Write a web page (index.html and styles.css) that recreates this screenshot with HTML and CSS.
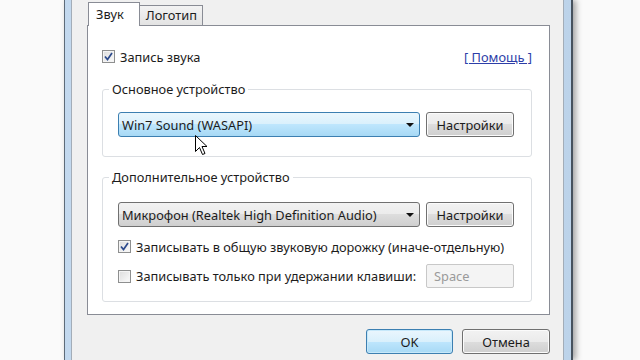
FILE: index.html
```html
<!DOCTYPE html>
<html lang="ru">
<head>
    <meta charset="UTF-8">
    <meta name="viewport" content="width=device-width, initial-scale=1.0">
    <title>Настройки записи</title>
    <link rel="stylesheet" href="styles.css">
</head>
<body>

    <div class="screen">
        <div class="frame">
            <div class="dialog">
                <div class="tabs">
                    <div class="tab active">Звук</div>
                    <div class="tab">Логотип</div>
                </div>

                <div class="panel">
                    <div class="top-row">
                        <label class="check">
                            <span class="box">
                                <svg width="9" height="9" viewBox="0 0 9 9"><path d="M1 4.5 L3.5 7.5 L8 1" fill="none" stroke="#2c4a8c" stroke-width="1.7"/></svg>
                            </span>
                            Запись звука
                        </label>
                        <a class="help" href="#">[ Помощь ]</a>
                    </div>

                    <fieldset class="group group-main">
                        <legend>Основное устройство</legend>
                        <div class="device-row">
                            <div class="combo hover">
                                <span>Win7 Sound (WASAPI)</span>
                                <span class="arrow"></span>
                            </div>
                            <button class="btn">Настройки</button>
                        </div>
                    </fieldset>

                    <fieldset class="group group-extra">
                        <legend>Дополнительное устройство</legend>
                        <div class="device-row">
                            <div class="combo">
                                <span>Микрофон (Realtek High Definition Audio)</span>
                                <span class="arrow"></span>
                            </div>
                            <button class="btn">Настройки</button>
                        </div>
                        <label class="check row-mix">
                            <span class="box">
                                <svg width="9" height="9" viewBox="0 0 9 9"><path d="M1 4.5 L3.5 7.5 L8 1" fill="none" stroke="#2c4a8c" stroke-width="1.7"/></svg>
                            </span>
                            Записывать в общую звуковую дорожку (иначе-отдельную)
                        </label>
                        <div class="key-row">
                            <label class="check">
                                <span class="box"></span>
                                Записывать только при удержании клавиши:
                            </label>
                            <div class="keybox">Space</div>
                        </div>
                    </fieldset>
                </div>

                <div class="actions">
                    <button class="btn default">OK</button>
                    <button class="btn">Отмена</button>
                </div>
            </div>
        </div>

        <svg class="cursor" width="13" height="21" viewBox="0 0 13 21">
            <path d="M0.5 0.5 L0.5 16.5 L4.5 12.5 L7.5 19.5 L10 18.5 L7 11.5 L12 11.5 Z" fill="#fff" stroke="#000" stroke-width="1"/>
        </svg>
    </div>

</body>
</html>
```

FILE: styles.css
```css
* {
    box-sizing: border-box;
}

body {
    margin: 0;
    background-color: #fafafa;
    font-family: "Noto Sans", "DejaVu Sans", sans-serif;
    font-size: 12.8px;
    color: #1c1c1c;
}

.screen {
    position: relative;
    width: 640px;
    height: 360px;
    overflow: hidden;
}

.frame {
    margin-left: 64px;
    width: 509px;
    height: 360px;
    padding: 0 7px 0 6px;
    background: linear-gradient(to right, #c2d8ee, #d6e6f6 50%, #bcd3ea);
    border-left: 1px solid #5d6b79;
    border-right: 2px solid #46525e;
    box-shadow: 3px 0 6px rgba(0, 0, 0, 0.35);
}

.dialog {
    height: 100%;
    padding: 2px 13px 0 15px;
    background-color: #f0f0f0;
    border-left: 1px solid #a3adb8;
    border-right: 1px solid #a3adb8;
}

/* tabs */

.tabs {
    display: flex;
    align-items: flex-end;
    height: 23px;
    padding-left: 1px;
}

.tab {
    height: 20px;
    padding: 0 5px 0 6px;
    line-height: 18px;
    border: 1px solid #898c95;
    border-bottom: none;
    background: linear-gradient(#f3f3f3, #e3e3e3);
}

.tab + .tab {
    border-left: none;
}

.tab.active {
    position: relative;
    z-index: 1;
    height: 24px;
    margin-bottom: -1px;
    padding: 3px 15px 0 7px;
    line-height: 16px;
    background: #fff;
}

/* panel */

.panel {
    width: 463px;
    padding: 21px 17px 12px 14px;
    background-color: #fff;
    border: 1px solid #898c95;
}

.top-row {
    display: flex;
    justify-content: space-between;
    align-items: center;
    height: 19px;
}

.check {
    display: flex;
    align-items: center;
    gap: 5px;
    height: 19px;
    white-space: nowrap;
}

.box {
    display: flex;
    justify-content: center;
    align-items: center;
    width: 13px;
    height: 13px;
    border: 1px solid #8e8f8f;
    background: linear-gradient(135deg, #dcdcdc, #fbfbfb);
    box-shadow: inset 0 0 0 1px #f4f4f4;
}

.help {
    color: #2d3ea8;
    text-decoration: underline;
}

.group {
    margin: 0;
    padding: 0 17px 0 15px;
    border: 1px solid #dcdfe3;
    border-radius: 3px;
    min-width: 0;
}

.group legend {
    margin-left: -9px;
    padding: 0 3px;
    line-height: 17px;
}

.group-main {
    margin-top: 15px;
    padding-top: 14px;
    padding-bottom: 19px;
}

.group-extra {
    margin-top: 12px;
    padding-top: 16px;
    padding-bottom: 13px;
}

.device-row {
    display: flex;
    gap: 6px;
    height: 25px;
}

.combo {
    display: flex;
    justify-content: space-between;
    align-items: center;
    width: 302px;
    padding: 0 5px 0 3px;
    border: 1px solid #707070;
    border-radius: 3px;
    background: linear-gradient(#f2f2f2, #ebebeb 50%, #dddddd 50%, #cfcfcf);
}

.combo.hover {
    border-color: #3c7fb1;
    background: linear-gradient(#eaf6fd, #d9f0fc 50%, #bee6fd 50%, #a7d9f5);
}

.arrow {
    width: 0;
    height: 0;
    border-left: 4px solid transparent;
    border-right: 4px solid transparent;
    border-top: 4px solid #111;
}

.btn {
    width: 88px;
    height: 25px;
    padding: 0;
    font: inherit;
    color: #1c1c1c;
    border: 1px solid #707070;
    border-radius: 3px;
    background: linear-gradient(#f2f2f2, #ebebeb 50%, #dddddd 50%, #cfcfcf);
    box-shadow: inset 0 0 0 1px #fbfbfb;
}

.btn.default {
    width: 87px;
    border-color: #3c7fb1;
    background: linear-gradient(#eaf6fd, #d9f0fc 50%, #bee6fd 50%, #a7d9f5);
    box-shadow: inset 0 0 0 1px #c6e8fa;
}

.row-mix {
    margin-top: 10px;
}

.key-row {
    display: flex;
    justify-content: space-between;
    align-items: center;
    width: 396px;
    height: 24px;
    margin-top: 8px;
}

.keybox {
    width: 88px;
    height: 24px;
    padding-left: 7px;
    line-height: 22px;
    color: #9a9a9a;
    border: 1px solid #c8c8c8;
    border-radius: 2px;
    background-color: #f4f4f4;
}

/* bottom buttons */

.actions {
    display: flex;
    justify-content: flex-end;
    gap: 9px;
    width: 463px;
    margin-top: 14px;
}

.cursor {
    position: absolute;
    left: 195px;
    top: 135px;
}
```
